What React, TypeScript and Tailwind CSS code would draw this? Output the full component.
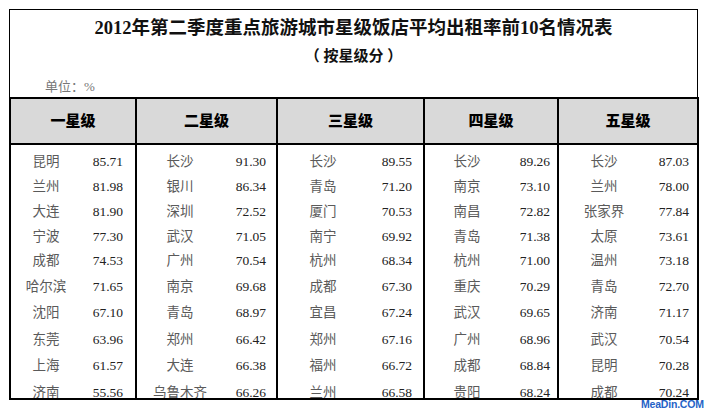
const cols = [
  {
    title: "一星级",
    w: "w-[124px]",
    city: "w-[70px]",
    num: "pr-[12px]",
    rows: [
      ["昆明", "85.71"], ["兰州", "81.98"], ["大连", "81.90"], ["宁波", "77.30"], ["成都", "74.53"],
      ["哈尔滨", "71.65"], ["沈阳", "67.10"], ["东莞", "63.96"], ["上海", "61.57"], ["济南", "55.56"],
    ],
  },
  {
    title: "二星级",
    w: "w-[141px] border-l-2",
    city: "w-[86px]",
    num: "pr-[10px]",
    rows: [
      ["长沙", "91.30"], ["银川", "86.34"], ["深圳", "72.52"], ["武汉", "71.05"], ["广州", "70.54"],
      ["南京", "69.68"], ["青岛", "68.97"], ["郑州", "66.42"], ["大连", "66.38"], ["乌鲁木齐", "66.26"],
    ],
  },
  {
    title: "三星级",
    w: "w-[147px] border-l-2",
    city: "w-[90px]",
    num: "pr-[11px]",
    rows: [
      ["长沙", "89.55"], ["青岛", "71.20"], ["厦门", "70.53"], ["南宁", "69.92"], ["杭州", "68.34"],
      ["成都", "67.30"], ["宜昌", "67.24"], ["郑州", "67.16"], ["福州", "66.72"], ["兰州", "66.58"],
    ],
  },
  {
    title: "四星级",
    w: "w-[134px] border-l-2",
    city: "w-[84px]",
    num: "pr-[7px]",
    rows: [
      ["长沙", "89.26"], ["南京", "73.10"], ["南昌", "72.82"], ["青岛", "71.38"], ["杭州", "71.00"],
      ["重庆", "70.29"], ["武汉", "69.65"], ["广州", "68.96"], ["成都", "68.84"], ["贵阳", "68.24"],
    ],
  },
  {
    title: "五星级",
    w: "w-[140px] border-l-2",
    city: "w-[90px]",
    num: "pr-[8px]",
    rows: [
      ["长沙", "87.03"], ["兰州", "78.00"], ["张家界", "77.84"], ["太原", "73.61"], ["温州", "73.18"],
      ["青岛", "72.70"], ["济南", "71.17"], ["武汉", "70.54"], ["昆明", "70.28"], ["成都", "70.24"],
    ],
  },
]

const font = "font-['Liberation_Serif','Noto_Sans_CJK_SC',serif]"

export default function App() {
  return (
    <div className={`relative w-[708px] h-[410px] bg-white pl-[9px] pt-[9px] text-black ${font}`}>
      <div className="w-[690px]">
        {/* title block */}
        <div className="h-[88px] w-[689px] border border-b-0 border-black flex flex-col">
          <p className="mt-[7px] text-center text-[18.5px] leading-[22px] font-bold text-[#111]">
            2012年第二季度重点旅游城市星级饭店平均出租率前10名情况表
          </p>
          <p className="mt-[7px] text-center text-[15px] leading-[20px] font-bold text-[#111]">
            （ 按星级分 ）
          </p>
          <p className="mt-[13px] pl-[35px] text-[13px] leading-[16px] text-[#777]">单位：%</p>
        </div>

        {/* table */}
        <div className="border-2 border-black">
          <div className="flex border-b-2 border-black bg-[#d9d9d9]">
            {cols.map((c) => (
              <div key={c.title} className={`${c.w} h-[44px] border-black flex items-center justify-center text-[15px] font-black text-black`}>
                {c.title}
              </div>
            ))}
          </div>
          <div className="flex h-[253px] overflow-hidden">
            {cols.map((c) => (
              <div key={c.title} className={`${c.w} border-black pt-[5px]`}>
                {c.rows.map(([city, val], i) => (
                  <div key={i} className={`flex items-center ${i < 5 ? "h-[24.75px]" : "h-[26.5px]"}`}>
                    <span className={`${c.city} text-center text-[13.5px] text-[#5a5a5a] whitespace-nowrap`}>{city}</span>
                    <span className={`flex-1 text-right text-[13.5px] text-[#222] ${c.num}`}>{val}</span>
                  </div>
                ))}
              </div>
            ))}
          </div>
        </div>
      </div>

      <span className="absolute left-[641px] top-[399px] font-['Liberation_Sans',sans-serif] font-bold text-[10.5px] leading-[10px] tracking-[-0.2px] text-[#2563c7]">
        MeaDin.COM
      </span>
    </div>
  )
}
